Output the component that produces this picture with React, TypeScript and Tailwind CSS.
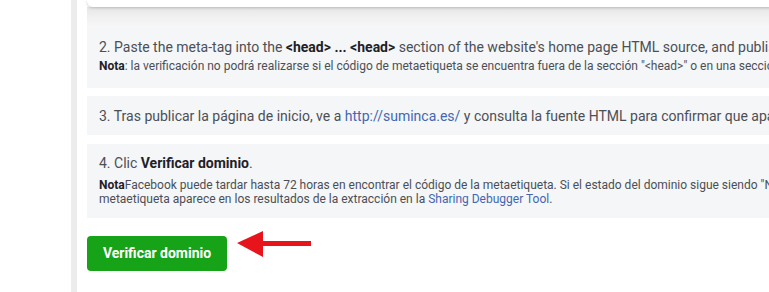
export default function App() {
  return (
    <div
      className="flex w-[769px] h-[292px] overflow-hidden bg-white text-[#4b4f56]"
      style={{ fontFamily: "Roboto, 'Liberation Sans', sans-serif" }}
    >
      {/* left gutter */}
      <div className="w-[71px] shrink-0 bg-white" />
      <div className="w-[6px] shrink-0 bg-[#ececec]" />

      <div className="flex flex-col pl-[10px] shrink-0 w-[1000px]">
        {/* bottom of previous card */}
        <div className="h-[7px] bg-white rounded-bl-md shadow-[0_1px_3px_rgba(0,0,0,0.2)] relative z-10" />
        <div className="h-[21px] bg-gradient-to-b from-[#e6e6e6] via-[#f1f1f1] to-[#f7f7f7]" />

        {/* step 2 */}
        <div className="h-[60px] bg-[#f5f6f7] pl-[12px] pt-[10px]">
          <p className="text-[14px] leading-[18px] whitespace-nowrap">
            2. Paste the meta-tag into the <b className="font-bold text-[#1d2129]">&lt;head&gt; ... &lt;head&gt;</b> section of the website's home page HTML source, and publish it.
          </p>
          <p className="mt-[3px] text-[12px] leading-[14px] whitespace-nowrap">
            <b className="font-bold text-[#1d2129]">Nota</b>: la verificación no podrá realizarse si el código de metaetiqueta se encuentra fuera de la sección "&lt;head&gt;" o en una sección que se carga dinámicamente.
          </p>
        </div>

        {/* step 3 */}
        <div className="mt-[8px] h-[39px] bg-[#f5f6f7] pl-[12px] flex items-center">
          <p className="text-[14px] leading-[18px] whitespace-nowrap">
            3. Tras publicar la página de inicio, ve a <span className="text-[#4267b2]">http://suminca.es/</span> y consulta la fuente HTML para confirmar que aparece la metaetiqueta.
          </p>
        </div>

        {/* step 4 */}
        <div className="mt-[9px] h-[74px] bg-[#f5f6f7] pl-[12px] pt-[10px]">
          <p className="text-[14px] leading-[18px] whitespace-nowrap">
            4. Clic <b className="font-bold text-[#1d2129]">Verificar dominio</b>.
          </p>
          <p className="mt-[6px] text-[12px] leading-[14px] whitespace-nowrap">
            <b className="font-bold text-[#1d2129]">Nota</b>Facebook puede tardar hasta 72 horas en encontrar el código de la metaetiqueta. Si el estado del dominio sigue siendo "No verificado", comprueba que la
          </p>
          <p className="text-[12px] leading-[14px] whitespace-nowrap">
            metaetiqueta aparece en los resultados de la extracción en la <span className="text-[#4267b2]">Sharing Debugger Tool</span>.
          </p>
        </div>

        {/* button + arrow */}
        <div className="mt-[18px] flex items-center gap-[10px]">
          <button className="w-[140px] h-[35px] rounded-[4px] bg-[#17a317] text-white text-[14px] font-bold">
            Verificar dominio
          </button>
          <svg width="76" height="30" viewBox="0 0 76 30" className="-mt-[17px]">
            <polygon points="0,13 26,1 26,27" fill="#e8141b" />
            <rect x="24" y="11" width="50" height="5" fill="#e8141b" />
          </svg>
        </div>
      </div>
    </div>
  );
}
